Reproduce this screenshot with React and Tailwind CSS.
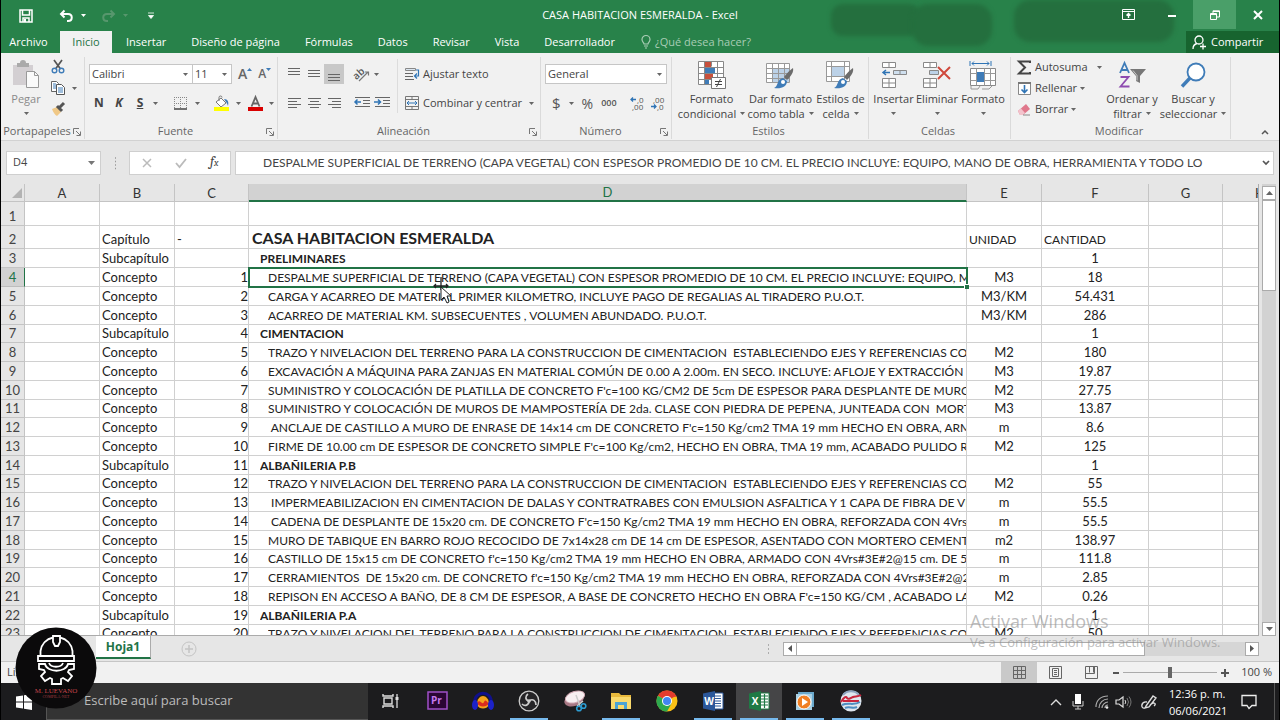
import React from 'react';
import { clsx } from 'clsx';

const DESPALME =
  'DESPALME SUPERFICIAL DE TERRENO (CAPA VEGETAL) CON ESPESOR PROMEDIO DE 10 CM. EL PRECIO INCLUYE: EQUIPO, MANO DE OBRA, HERRAMIENTA Y TODO LO';
const TRAZO =
  'TRAZO Y NIVELACION DEL TERRENO PARA LA CONSTRUCCION DE CIMENTACION  ESTABLECIENDO EJES Y REFERENCIAS CON';

const columns = [
  { id: 'A', width: 'w-[75px]' },
  { id: 'B', width: 'w-[75px]' },
  { id: 'C', width: 'w-[74px]' },
  { id: 'D', width: 'w-[718px]' },
  { id: 'E', width: 'w-[75px]' },
  { id: 'F', width: 'w-[107px]' },
  { id: 'G', width: 'w-[74px]' },
  { id: 'H', width: 'w-[75px]' },
];

// [tipo, número, descripción, unidad, cantidad]
const rows = [
  ['', '', '', '', ''],
  ['Capítulo', '-', 'CASA HABITACION ESMERALDA', 'UNIDAD', 'CANTIDAD'],
  ['Subcapítulo', '', 'PRELIMINARES', '', '1'],
  ['Concepto', '1', DESPALME, 'M3', '18'],
  ['Concepto', '2', 'CARGA Y ACARREO DE MATERIAL PRIMER KILOMETRO, INCLUYE PAGO DE REGALIAS AL TIRADERO P.U.O.T.', 'M3/KM', '54.431'],
  ['Concepto', '3', 'ACARREO DE MATERIAL KM. SUBSECUENTES , VOLUMEN ABUNDADO. P.U.O.T.', 'M3/KM', '286'],
  ['Subcapítulo', '4', 'CIMENTACION', '', '1'],
  ['Concepto', '5', TRAZO, 'M2', '180'],
  ['Concepto', '6', 'EXCAVACIÓN A MÁQUINA PARA ZANJAS EN MATERIAL COMÚN DE 0.00 A 2.00m. EN SECO. INCLUYE: AFLOJE Y EXTRACCIÓN', 'M3', '19.87'],
  ['Concepto', '7', "SUMINISTRO Y COLOCACIÓN DE PLATILLA DE CONCRETO F'c=100 KG/CM2 DE 5cm DE ESPESOR PARA DESPLANTE DE MUROS,", 'M2', '27.75'],
  ['Concepto', '8', 'SUMINISTRO Y COLOCACIÓN DE MUROS DE MAMPOSTERÍA DE 2da. CLASE CON PIEDRA DE PEPENA, JUNTEADA CON  MORTE', 'M3', '13.87'],
  ['Concepto', '9', " ANCLAJE DE CASTILLO A MURO DE ENRASE DE 14x14 cm DE CONCRETO F'c=150 Kg/cm2 TMA 19 mm HECHO EN OBRA, ARMA", 'm', '8.6'],
  ['Concepto', '10', "FIRME DE 10.00 cm DE ESPESOR DE CONCRETO SIMPLE F'c=100 Kg/cm2, HECHO EN OBRA, TMA 19 mm, ACABADO PULIDO RA", 'M2', '125'],
  ['Subcapítulo', '11', 'ALBAÑILERIA P.B', '', '1'],
  ['Concepto', '12', TRAZO, 'M2', '55'],
  ['Concepto', '13', ' IMPERMEABILIZACION EN CIMENTACION DE DALAS Y CONTRATRABES CON EMULSION ASFALTICA Y 1 CAPA DE FIBRA DE VID', 'm', '55.5'],
  ['Concepto', '14', " CADENA DE DESPLANTE DE 15x20 cm. DE CONCRETO F'c=150 Kg/cm2 TMA 19 mm HECHO EN OBRA, REFORZADA CON 4Vrs#4", 'm', '55.5'],
  ['Concepto', '15', 'MURO DE TABIQUE EN BARRO ROJO RECOCIDO DE 7x14x28 cm DE 14 cm DE ESPESOR, ASENTADO CON MORTERO CEMENTO-', 'm2', '138.97'],
  ['Concepto', '16', "CASTILLO DE 15x15 cm DE CONCRETO f'c=150 Kg/cm2 TMA 19 mm HECHO EN OBRA, ARMADO CON 4Vrs#3E#2@15 cm. DE 5.0", 'm', '111.8'],
  ['Concepto', '17', "CERRAMIENTOS  DE 15x20 cm. DE CONCRETO f'c=150 Kg/cm2 TMA 19 mm HECHO EN OBRA, REFORZADA CON 4Vrs#3E#2@20", 'm', '2.85'],
  ['Concepto', '18', "REPISON EN ACCESO A BAÑO, DE 8 CM DE ESPESOR, A BASE DE CONCRETO HECHO EN OBRA F'c=150 KG/CM , ACABADO LAV", 'M2', '0.26'],
  ['Subcapítulo', '19', 'ALBAÑILERIA P.A', '', '1'],
  ['Concepto', '20', TRAZO, 'M2', '50'],
];

const menuTabs = ['Insertar', 'Diseño de página', 'Fórmulas', 'Datos', 'Revisar', 'Vista', 'Desarrollador'];

const Svg = ({ w = 16, h = 16, children, className }) => (
  <svg width={w} height={h} viewBox={`0 0 ${w} ${h}`} fill="none" aria-hidden="true" className={clsx('shrink-0 overflow-visible', className)}>
    {children}
  </svg>
);

const Caret = ({ className = 'text-[#666]' }) => (
  <Svg w={5} h={3} className={className}>
    <path d="M0 0h5L2.500 3z" fill="currentColor" />
  </Svg>
);

const Lines = ({ rows: d }) => (
  <Svg w={14} h={14}>
    <path d={d} stroke="#666" />
  </Svg>
);

const Divider = () => <span className="h-5 w-px bg-[#d8d8d8]" />;

/* ---------- title bar ---------- */

const TitleBar = () => (
  <div className="relative flex h-[31px] items-center justify-between text-white">
    <div className="flex items-center pl-[18px]">
      <button aria-label="Guardar" className="flex w-[38px]">
        <Svg w={14} h={14}>
          <path d="M1 1h12v12H1zM3.500 1v5h7V1M4 13V9h6v4" stroke="#fff" strokeWidth="1.500" />
          <path d="M5 10h2v3H5z" fill="#fff" />
        </Svg>
      </button>
      <button aria-label="Deshacer" className="flex w-[42px] items-center gap-[7px] pl-[2px]">
        <Svg w={15} h={14}>
          <path d="M5.500 1.500L2 5l3.500 3.500M2.500 5H9c5 0 5 7 0 7H8" stroke="#fff" strokeWidth="2" />
        </Svg>
        <Caret className="text-white" />
      </button>
      <button aria-label="Rehacer" className="flex w-[49px] items-center gap-[7px] pl-[2px]">
        <Svg w={15} h={14}>
          <path d="M9.500 1.500L13 5 9.500 8.500M12.500 5H6c-5 0-5 7 0 7h1" stroke="#57976d" strokeWidth="2" />
        </Svg>
        <Caret className="text-[#57976d]" />
      </button>
      <button aria-label="Personalizar barra" className="flex">
        <Svg w={6} h={7}>
          <path d="M0 1h6M.5 3.500h5L3 6.500z" fill="#fff" stroke="#fff" strokeWidth=".8" />
        </Svg>
      </button>
    </div>
    <h1 className="absolute left-1/2 -translate-x-1/2 text-[11px]">CASA HABITACION ESMERALDA - Excel</h1>
    <div className="flex h-[29px] self-start">
      <button aria-label="Opciones de la cinta" className="grid w-[43px] place-items-center">
        <Svg w={13} h={11}>
          <path d="M.5.500h12v10H.5zM.5 2.500h12" stroke="#fff" />
          <path d="M6.500 9V5M4.500 6.500l2-2 2 2" stroke="#fff" strokeWidth="1.400" />
        </Svg>
      </button>
      <button aria-label="Minimizar" className="grid w-[43px] place-items-center">
        <Svg w={10} h={4}>
          <path d="M1 3h8" stroke="#fff" strokeWidth="2" />
        </Svg>
      </button>
      <button aria-label="Restaurar" className="grid w-[43px] place-items-center bg-[#4a9f69]">
        <Svg w={10} h={10}>
          <path d="M.5 3.500h6v6h-6zM.5 4.500h6M3 3V.800h6.500V7H7M3 1.500h6" stroke="#fff" />
        </Svg>
      </button>
      <button aria-label="Cerrar" className="grid w-[43px] place-items-center">
        <Svg w={10} h={10}>
          <path d="M1 1l8 8M9 1L1 9" stroke="#fff" strokeWidth="2" />
        </Svg>
      </button>
    </div>
  </div>
);

const MenuTabs = () => (
  <nav className="relative flex h-[22px] items-stretch text-[11px] text-white">
    <button className="w-[59px] pr-1">Archivo</button>
    <button className="mr-px w-[52px] bg-[#f1f1f1] text-[#217346]">Inicio</button>
    {menuTabs.map((t) => (
      <button key={t} className="pl-[13px] pr-3">
        {t}
      </button>
    ))}
    <button className="flex items-center gap-1 pl-[14px] text-[#a9cdb5]">
      <Svg w={10} h={14}>
        <path d="M3 9C3 7.500 1 7 1 4.500a4 4 0 018 0C9 7 7 7.500 7 9zM3 11h4M4 13h2" stroke="#a9cdb5" strokeWidth="1.200" />
      </Svg>
      ¿Qué desea hacer?
    </button>
    <button className="ml-auto flex w-[93px] items-center gap-1 bg-[#17642f] pl-[6px]">
      <Svg w={15} h={15}>
        <circle cx="7" cy="5" r="4" stroke="#fff" strokeWidth="1.300" />
        <path d="M1 14c0-3 2-5 4-5.500M8 11.500h6M11 8.500v6" stroke="#fff" strokeWidth="1.300" />
      </Svg>
      Compartir
    </button>
  </nav>
);

/* ---------- ribbon ---------- */

const Group = ({ label, width, launcher, children }) => (
  <section className={clsx('flex shrink-0 flex-col pt-1', width)}>
    <div className="flex min-h-0 flex-1 border-r border-[#dadada] pt-[2px]">{children}</div>
    <div className="mb-px flex h-[15px] items-center border-r border-[#dadada] pr-[3px] text-[#666]">
      <span className="flex-1 text-center">{label}</span>
      {launcher && (
        <button aria-label={`Configuración de ${label}`}>
          <Svg w={8} h={8}>
            <path d="M.5 6V.500H6M3 3l4 4M7.500 3.500v4h-4" stroke="#777" />
          </Svg>
        </button>
      )}
    </div>
  </section>
);

const BigButton = ({ icon, top, bottom, width, muted }) => (
  <button className={clsx('flex shrink-0 flex-col items-center leading-[15px]', width, muted ? 'text-[#8a8a8a]' : 'text-[#444]')}>
    <span className="grid h-[32px] place-items-center">{icon}</span>
    <span className="whitespace-nowrap">{top}</span>
    <span className="flex h-[15px] items-center gap-1 whitespace-nowrap">
      {bottom}
      <Caret />
    </span>
  </button>
);

const Clipboard = () => (
  <Group label="Portapapeles" width="w-[84px]" launcher>
    <BigButton
      width="w-[50px]"
      top="Pegar"
      muted
      icon={
        <Svg w={28} h={30}>
          <path d="M1 5h20v20H1z" fill="#d3cfd2" />
          <path d="M5 3h3a3 3 0 016 0h3v4H5z" fill="#aaa" />
          <path d="M14.500 11.500h8l4 4v12h-12z" fill="#fafafa" stroke="#999" />
          <path d="M22.500 11.500v4h4" stroke="#999" />
        </Svg>
      }
    />
    <div className="flex flex-col gap-[7px]">
      <button aria-label="Cortar">
        <Svg w={14} h={15}>
          <path d="M3 1l6.500 9M11 1L4.500 10" stroke="#555" strokeWidth="1.700" />
          <circle cx="3.500" cy="11.500" r="2.300" stroke="#3f7cb8" strokeWidth="1.400" />
          <circle cx="10.500" cy="11.500" r="2.300" stroke="#3f7cb8" strokeWidth="1.400" />
        </Svg>
      </button>
      <button aria-label="Copiar" className="flex items-center gap-[7px]">
        <Svg w={14} h={14}>
          <path d="M.5.500h5l2 2v8h-7z" fill="#fff" stroke="#666" />
          <path d="M2 3h3M2 5h3M2 7h3" stroke="#3f7cb8" />
          <path d="M5.500 3.500h5l3 3v7h-8z" fill="#fff" stroke="#555" />
          <path d="M7 7h5M7 9h5M7 11h5" stroke="#3f7cb8" />
        </Svg>
        <Caret />
      </button>
      <button aria-label="Copiar formato">
        <Svg w={15} h={14}>
          <path d="M1 7l5-2 4 5-4 4C4 13 2 10 1 7z" fill="#f0c886" />
          <path d="M6 4l5 5M8 6l5-5" stroke="#555" strokeWidth="3" />
        </Svg>
      </button>
    </div>
  </Group>
);

const ComboBox = ({ label, value, width }) => (
  <label className={clsx('relative flex h-5 items-center border border-[#c6c6c6] bg-white', width)}>
    <select aria-label={label} defaultValue={value} className="h-full w-full appearance-none pl-[2px] text-[#444] outline-none">
      <option>{value}</option>
    </select>
    <span className="pointer-events-none absolute right-1">
      <Caret />
    </span>
  </label>
);

const FontGroup = () => (
  <Group label="Fuente" width="w-[193px]" launcher>
    <div className="flex flex-col gap-[9px] pl-1 pt-[5px]">
      <div className="flex items-center">
        <ComboBox label="Fuente" value="Calibri" width="w-[104px]" />
        <ComboBox label="Tamaño" value="11" width="-ml-px w-[40px]" />
        <button aria-label="Aumentar tamaño" className="ml-[6px] flex text-[14px] font-semibold leading-5 text-[#666]">
          A
          <Svg w={5} h={3} className="mt-1">
            <path d="M0 3h5L2.500 0z" fill="#3f7cb8" />
          </Svg>
        </button>
        <button aria-label="Reducir tamaño" className="ml-[6px] flex text-[12px] font-semibold leading-5 text-[#666]">
          A
          <Svg w={5} h={3} className="mt-1">
            <path d="M0 0h5L2.500 3z" fill="#3f7cb8" />
          </Svg>
        </button>
      </div>
      <div className="flex h-5 items-center text-[12px] text-[#444]">
        <button className="w-5 font-bold">N</button>
        <button className="w-5 font-bold italic">K</button>
        <button className="w-[22px] font-bold underline">S</button>
        <span className="ml-[2px]"><Caret /></span>
        <span className="ml-2"><Divider /></span>
        <button aria-label="Bordes" className="ml-2 flex items-center gap-2">
          <Svg w={13} h={13}>
            <path d="M.5 0v11M6.500 0v11M12.500 0v11M0 .500h12M0 6.500h12" stroke="#888" strokeDasharray="1 1" />
            <path d="M0 12h13" stroke="#444" strokeWidth="1.500" />
          </Svg>
          <Caret />
        </button>
        <span className="ml-[7px]"><Divider /></span>
        <button aria-label="Color de relleno" className="ml-[7px] flex items-center gap-[6px]">
          <Svg w={16} h={15}>
            <path d="M2 6l5-4 5 5-5 4z" fill="#fff" stroke="#777" />
            <path d="M5 5V1.500a1.500 1.500 0 013 0" stroke="#777" />
            <path d="M10 3c4 0 5 3 4 7-1-3-2-4-4-7z" fill="#3f7cb8" />
            <path d="M0 11h15v4H0z" fill="#ff0" />
          </Svg>
          <Caret />
        </button>
        <button aria-label="Color de fuente" className="ml-[7px] flex items-center gap-[6px]">
          <Svg w={15} h={15}>
            <path d="M3.500 10.500L7.500 1l4 9.500M5 7.500h5" stroke="#666" strokeWidth="1.800" />
            <path d="M0 11h15v4H0z" fill="#d90000" />
          </Svg>
          <Caret />
        </button>
      </div>
    </div>
  </Group>
);

const Indent = ({ right }) => (
  <Svg w={16} h={12}>
    <path d="M1 .500h15M9 3.500h7M9 6.500h7M1 9.500h15" stroke="#666" />
    <path d={right ? 'M0 5h6M4 2.500L6.500 5 4 7.500' : 'M1 5h6M3.500 2.500L1 5l2.500 2.500'} stroke="#2f74b5" strokeWidth="1.500" />
  </Svg>
);

const AlignGroup = () => (
  <Group label="Alineación" width="w-[263px]" launcher>
    <div className="flex flex-col gap-[9px] pl-[6px] pt-[5px]">
      <div className="flex h-5 items-center">
        <button aria-label="Alinear arriba" className="grid h-5 w-5 place-items-center"><Lines rows="M1 1.500h12M1 4.500h12M1 7.500h12" /></button>
        <button aria-label="Alinear en medio" className="grid h-5 w-5 place-items-center"><Lines rows="M1 3.500h12M1 6.500h12M1 9.500h12" /></button>
        <button aria-label="Alinear abajo" className="grid h-5 w-5 place-items-center bg-[#c8c8c8]"><Lines rows="M1 7.500h12M1 10.500h12M1 13.500h12" /></button>
        <span className="ml-1"><Divider /></span>
        <button aria-label="Orientación" className="ml-[6px] flex items-center gap-1">
          <Svg w={16} h={15}>
            <text x="0" y="11" fontSize="10" fontWeight="600" fill="#555" transform="rotate(-42 4 9)">ab</text>
            <path d="M5 14l9-9M11 5h3.500v3.500" stroke="#777" strokeWidth="1.200" />
          </Svg>
          <Caret />
        </button>
      </div>
      <div className="flex h-5 items-center">
        <button aria-label="Alinear a la izquierda" className="grid h-5 w-5 place-items-center"><Lines rows="M1 2.500h13M1 5.500h9M1 8.500h13M1 11.500h9" /></button>
        <button aria-label="Centrar" className="grid h-5 w-5 place-items-center"><Lines rows="M1 2.500h13M3 5.500h9M1 8.500h13M3 11.500h9" /></button>
        <button aria-label="Alinear a la derecha" className="grid h-5 w-5 place-items-center"><Lines rows="M1 2.500h13M5 5.500h9M1 8.500h13M5 11.500h9" /></button>
        <span className="ml-1"><Divider /></span>
        <button aria-label="Disminuir sangría" className="ml-[6px]"><Indent /></button>
        <button aria-label="Aumentar sangría" className="ml-1"><Indent right /></button>
      </div>
    </div>
    <div className="ml-[7px] h-[54px] w-px self-start bg-[#dcdcdc]" />
    <div className="flex flex-col gap-[9px] pl-[7px] pt-[5px] text-[#444]">
      <button className="flex h-5 items-center gap-[3px] whitespace-nowrap">
        <Svg w={15} h={15}>
          <path d="M.5 1.500h10v2H.5z" fill="#dce6f0" stroke="#888" />
          <path d="M0 6.500h8M0 9.500h8M0 12.500h9" stroke="#666" />
          <path d="M11 3h2.500v6H10M12 6.500L9.500 9l2.500 2.500" stroke="#2f74b5" strokeWidth="1.200" />
        </Svg>
        Ajustar texto
      </button>
      <button className="flex h-5 items-center gap-[3px] whitespace-nowrap">
        <Svg w={15} h={15}>
          <path d="M.5.500h13v13H.5zM.5 3.500h13M.5 10.500h13M7 .500v3M7 10.500v3" stroke="#777" />
          <path d="M2 7h10M4 5L2 7l2 2M10 5l2 2-2 2" stroke="#2f74b5" />
        </Svg>
        Combinar y centrar
        <span className="ml-1"><Caret /></span>
      </button>
    </div>
  </Group>
);

const NumberGroup = () => (
  <Group label="Número" width="w-[131px]" launcher>
    <div className="flex flex-col gap-[9px] pl-1 pt-[5px] text-[#555]">
      <ComboBox label="Formato de número" value="General" width="w-[122px]" />
      <div className="flex h-5 items-center">
        <button aria-label="Moneda" className="flex items-center gap-2 pl-[7px] text-[15px]">
          $ <Caret />
        </button>
        <button className="ml-2 text-[14px]">%</button>
        <button className="ml-2 text-[9px] font-semibold">000</button>
        <span className="ml-[6px]"><Divider /></span>
        <button aria-label="Aumentar decimales" className="ml-[7px]">
          <Svg w={15} h={14}>
            <path d="M1 3.500h5M3 1.500l-2 2 2 2" stroke="#2f74b5" strokeWidth="1.300" />
            <text x="7" y="7" fontSize="8" fill="#555">,0</text>
            <text x="2" y="14" fontSize="8" fill="#555">,00</text>
          </Svg>
        </button>
        <button aria-label="Disminuir decimales" className="ml-[5px]">
          <Svg w={15} h={14}>
            <path d="M1 10.500h5M4 8.500l2 2-2 2" stroke="#2f74b5" strokeWidth="1.300" />
            <text x="3" y="7" fontSize="8" fill="#555">,00</text>
            <text x="7" y="14" fontSize="8" fill="#555">,0</text>
          </Svg>
        </button>
      </div>
    </div>
  </Group>
);

const BrushTip = () => (
  <>
    <path d="M27 7c1 4-2 8-6 12l-3-3c3-4 6-7 9-9z" fill="#6c6c6c" />
    <path d="M17 17l4 3c0 6-6 8-13 7 4-1 3-9 9-10z" fill="#3f7cb8" />
    <circle cx="17" cy="21" r="2" fill="#fff" />
  </>
);

const StylesGroup = () => (
  <Group label="Estilos" width="w-[197px]">
    <div className="flex pl-[5px]">
      <BigButton
        width="w-[69px]"
        top="Formato"
        bottom="condicional"
        icon={
          <Svg w={29} h={28}>
            <path d="M1.500.500h25v23h-25z" fill="#fff" />
            <path d="M8 1h6v5H8zM8 12h8v6H8z" fill="#c8503c" />
            <path d="M8 6h10v6H8zM8 18h4v5H8z" fill="#3f7cb8" />
            <path d="M1.500.500h25v23h-25zM1.500 6.500h25M1.500 12.500h25M1.500 18.500h25M7.500.500v23M20.500.500v23M14.500.500v5" stroke="#888" />
            <path d="M14.500 16.500h14v11h-14z" fill="#fff" stroke="#777" />
            <path d="M18 20.500h7M18 23.500h7M23.500 18l-4 8" stroke="#444" />
          </Svg>
        }
      />
      <BigButton
        width="w-[69px]"
        top="Dar formato"
        bottom="como tabla"
        icon={
          <Svg w={29} h={28}>
            <path d="M.5 2.500h23v19H.5z" fill="#fff" />
            <path d="M6 7h17v14H6z" fill="#bcd2e8" />
            <path d="M.5 2.500h23v19H.5zM.5 7.500h23M.5 12.500h23M.5 17.500h23M6.500 2.500v19M12.500 2.500v19M18.500 2.500v19" stroke="#999" />
            <BrushTip />
          </Svg>
        }
      />
      <BigButton
        width="w-[51px]"
        top="Estilos de"
        bottom="celda"
        icon={
          <Svg w={29} h={28}>
            <path d="M.5.500h23v20H.5z" fill="#fff" />
            <path d="M5 6h14v9H5z" fill="#bcd2e8" />
            <path d="M.5.500h23v20H.5zM.5 5.500h23M.5 15.500h23M5.500.500v20M18.500.500v20" stroke="#999" />
            <BrushTip />
          </Svg>
        }
      />
    </div>
  </Group>
);

const CellsGroup = () => (
  <Group label="Celdas" width="w-[142px]">
    <div className="flex pl-[3px]">
      <BigButton
        width="w-[43px]"
        top="Insertar"
        icon={
          <Svg w={26} h={27}>
            <path d="M1.500.500h13v5h-13zM8 .500v5M1.500 16.500h13v9h-13zM8 16.500v9M1.500 21h13" fill="#fff" stroke="#888" />
            <path d="M12.500 8.500h13v4h-13z" fill="#cfdfee" stroke="#888" />
            <path d="M19 8.500v4" stroke="#888" />
            <path d="M2 10.500h7M5 8l-3 2.500L5 13" stroke="#2f74b5" strokeWidth="1.500" />
          </Svg>
        }
      />
      <BigButton
        width="w-[44px]"
        top="Eliminar"
        icon={
          <Svg w={28} h={27}>
            <path d="M.5.500h13v5H.5zM7 .500v5M.5 16.500h13v9H.5zM7 16.500v9M.5 21h13" fill="#fff" stroke="#888" />
            <path d="M6.500 8.500h9v4h-9z" fill="#bcd2e8" stroke="#888" />
            <path d="M15 5l12 12M27 5L15 17" stroke="#d0493c" strokeWidth="2" />
          </Svg>
        }
      />
      <BigButton
        width="w-[48px]"
        top="Formato"
        icon={
          <Svg w={28} h={29}>
            <path d="M1 0v5M22 0v5M3 2.500h17M5 .500l-2 2 2 2M18 .500l2 2-2 2" stroke="#2f74b5" />
            <path d="M1.500 7.500h25v17h-25z" fill="#fff" stroke="#888" />
            <path d="M1.500 12.500h25M1.500 19.500h25M7.500 7.500v17M15.500 7.500v17M21.500 7.500v17" stroke="#999" />
            <path d="M8 11h7v10H8z" fill="#3f7cb8" />
            <path d="M2 25v3h7l2-3M13 28h7l3-3" stroke="#999" />
          </Svg>
        }
      />
    </div>
  </Group>
);

const EditGroup = () => (
  <Group label="Modificar" width="w-[220px]">
    <div className="-mt-[2px] flex w-[90px] flex-col pl-[6px] text-[#444]">
      <button className="flex h-[21px] items-center gap-[3px]">
        <Svg w={15} h={15}>
          <path d="M13 3V1.500H2L8 7.500l-6 6h11V12" stroke="#444" strokeWidth="2" />
        </Svg>
        Autosuma
        <span className="ml-[6px]"><Caret /></span>
      </button>
      <button className="flex h-[21px] items-center gap-[3px]">
        <Svg w={15} h={15}>
          <path d="M1.500 1.500h12v12h-12z" fill="#fff" stroke="#888" />
          <path d="M1 1h13v2H1z" fill="#777" />
          <path d="M7.500 4v7M4.500 8.500l3 3 3-3" stroke="#2f74b5" strokeWidth="1.600" />
        </Svg>
        Rellenar
        <Caret />
      </button>
      <button className="flex h-[21px] items-center gap-[3px]">
        <Svg w={15} h={15}>
          <path d="M1 9l8-7 4 5-7 6H3z" fill="#e0788c" />
          <path d="M1 9l3-2.500L8 11l-2 2H3z" fill="#f3c3cc" />
          <path d="M6 13h7" stroke="#888" />
        </Svg>
        Borrar
        <Caret />
      </button>
    </div>
    <BigButton
      width="w-[62px]"
      top="Ordenar y"
      bottom="filtrar"
      icon={
        <Svg w={28} h={28}>
          <path d="M2 12L6.500 2 11 12M3.500 9h6" stroke="#3f7cb8" strokeWidth="1.800" />
          <path d="M2.500 16h8l-8 9.500h9" stroke="#8e4bb0" strokeWidth="1.800" />
          <path d="M12 8h16l-6 7v7l-4-2v-5z" fill="#777" />
          <path d="M15 9.500l4 5v5" stroke="#ccc" />
        </Svg>
      }
    />
    <BigButton
      width="w-[60px]"
      top="Buscar y"
      bottom="seleccionar"
      icon={
        <Svg w={26} h={27}>
          <circle cx="16" cy="10" r="8.500" fill="#fff" stroke="#3f7cb8" strokeWidth="1.800" />
          <path d="M10 16l-8 8.500" stroke="#3f7cb8" strokeWidth="3.400" />
        </Svg>
      }
    />
  </Group>
);

const Ribbon = () => (
  <div className="flex h-[88px] shrink-0 border-b border-[#d2d2d2] bg-[#f1f1f1]">
    <Clipboard />
    <FontGroup />
    <AlignGroup />
    <NumberGroup />
    <StylesGroup />
    <CellsGroup />
    <EditGroup />
    <button aria-label="Contraer la cinta" className="mb-1 ml-auto mr-[10px] self-end">
      <Svg w={8} h={8}>
        <path d="M1 6l3-3 3 3" stroke="#555" strokeWidth="1.500" />
      </Svg>
    </button>
  </div>
);

/* ---------- formula bar and sheet ---------- */

const FormulaBar = () => (
  <div className="flex h-[43px] shrink-0 items-center pl-[5px] pr-[5px] text-[#444]">
    <div className="flex h-6 w-[95px] items-center border border-[#cfcfcf] bg-white pr-[5px]">
      <input aria-label="Cuadro de nombres" defaultValue="D4" className="w-full pl-[6px] outline-none" />
      <Svg w={7} h={4}>
        <path d="M0 0h7L3.500 4z" fill="#777" />
      </Svg>
    </div>
    <Svg w={3} h={12} className="ml-[13px]">
      <path d="M1 1h1M1 4.500h1M1 8h1M1 11.500h1" stroke="#999" strokeWidth="1.500" />
    </Svg>
    <div className="ml-3 flex h-6 w-[102px] items-center justify-around border border-[#cfcfcf] bg-white">
      <button aria-label="Cancelar">
        <Svg w={10} h={10}><path d="M1 1l8 8M9 1L1 9" stroke="#bbb" strokeWidth="1.500" /></Svg>
      </button>
      <button aria-label="Introducir">
        <Svg w={12} h={10}><path d="M1 5l3.500 4L11 1" stroke="#bbb" strokeWidth="1.800" /></Svg>
      </button>
      <button aria-label="Insertar función" className="font-serif text-[14px] italic leading-4 text-[#444]">
        f<span className="text-[10px]">x</span>
      </button>
    </div>
    <div className="ml-1 flex h-6 min-w-0 flex-1 items-center border border-[#cfcfcf] bg-white pr-[3px]">
      <input
        aria-label="Barra de fórmulas"
        defaultValue={DESPALME}
        className="min-w-0 flex-1 pl-[27px] font-['Lato',sans-serif] text-[12px] outline-none"
      />
      <Svg w={8} h={8}>
        <path d="M1 2l3 3 3-3" stroke="#555" strokeWidth="1.700" />
      </Svg>
    </div>
  </div>
);

const Cursor = () => (
  <svg width="24" height="28" viewBox="0 0 24 28" className="pointer-events-none absolute left-[184px] top-2 z-10" aria-hidden="true">
    <path d="M8 1v13M1 10h14M3 8l-2 2 2 2M13 8l2 2-2 2" fill="none" stroke="#222" strokeWidth="1.300" />
    <path d="M8 11v13l3-3 3 6 2-1-2-6h4z" fill="#fff" stroke="#222" />
  </svg>
);

const cell = 'overflow-hidden whitespace-pre border-b border-r border-[#d0d0d0] p-0 align-bottom';

const Row = ({ data, n }) => {
  const [kind, num, text, unit, qty] = data;
  const chapter = kind === 'Capítulo';
  const sub = kind === 'Subcapítulo';
  const active = n === 4;
  return (
    <tr className={clsx(n === 1 ? 'h-6' : n === 2 ? 'h-[23px]' : 'h-[19px] nth-[4n+7]:h-[18px]')}>
      <th
        scope="row"
        className={clsx(
          'border-b border-r p-0 align-bottom font-normal',
          active ? 'border-b-[#bdbdbd] border-r-[#217346] bg-[#d2d2d2] text-[#217346]' : 'border-[#c4c4c4] bg-[#e6e6e6] text-[#444]'
        )}
      >
        {n}
      </th>
      <td className={cell} />
      <td className={clsx(cell, 'pl-[2px]')}>{kind}</td>
      <td className={clsx(cell, chapter ? 'pl-[2px]' : 'text-right')}>{num}</td>
      <td
        className={clsx(
          cell,
          active && 'relative overflow-visible',
          chapter ? 'pl-[3px] text-[16px] font-bold leading-5' : 'text-[12px]',
          sub && 'pl-[11px] font-bold',
          !chapter && !sub && 'pl-[19px]'
        )}
      >
        <div className="overflow-hidden">{text}</div>
        {active && (
          <>
            <span className="absolute -left-px -top-px bottom-[-2px] right-[-2px] border-2 border-[#217346]" />
            <span className="absolute bottom-[-3px] right-[-3px] h-[5px] w-[5px] border-l border-t border-white bg-[#217346]" />
            <Cursor />
          </>
        )}
      </td>
      <td className={clsx(cell, chapter ? 'pl-[2px] text-[12px]' : 'text-center')}>{unit}</td>
      <td className={clsx(cell, chapter ? 'pl-[2px] text-[12px]' : 'text-center')}>{qty}</td>
      <td className={cell} />
      <td className={cell} />
    </tr>
  );
};

const Sheet = () => (
  <div className="flex min-h-0 flex-1">
    <div className="min-w-0 flex-1 overflow-hidden border-b border-r border-[#ababab]">
      <table className="w-[1297px] table-fixed border-separate border-spacing-0 bg-white font-['Lato',sans-serif] text-[13px] leading-[17px] text-[#222]">
        <thead>
          <tr className="h-[18px]">
            <th aria-label="Seleccionar todo" className="w-6 border-b border-r border-[#c4c4c4] bg-[#e6e6e6] p-0">
              <Svg w={12} h={12} className="ml-[10px]">
                <path d="M11 1v10H1z" fill="#b3b3b3" />
              </Svg>
            </th>
            {columns.map((c) => (
              <th
                key={c.id}
                scope="col"
                className={clsx(
                  'border-r border-[#c4c4c4] p-0 font-normal leading-4',
                  c.width,
                  c.id === 'D' ? 'border-b-2 border-b-[#217346] bg-[#d2d2d2] text-[#217346]' : 'border-b bg-[#e6e6e6] text-[#333]'
                )}
              >
                {c.id}
              </th>
            ))}
          </tr>
        </thead>
        <tbody>
          {rows.map((r, i) => (
            <Row key={i} data={r} n={i + 1} />
          ))}
        </tbody>
      </table>
    </div>
    <div className="ml-[3px] mr-[3px] flex w-[14px] flex-col bg-[#d2d2d2] pt-[2px]">
      <button aria-label="Subir" className="grid h-[14px] place-items-center border border-[#ababab] bg-white">
        <Svg w={7} h={4}><path d="M0 4h7L3.500 0z" fill="#666" /></Svg>
      </button>
      <div className="h-[91px] border border-[#ababab] bg-white" />
      <button aria-label="Bajar" className="mt-auto grid h-[14px] place-items-center border border-[#ababab] bg-white">
        <Svg w={7} h={4}><path d="M0 0h7L3.500 4z" fill="#666" /></Svg>
      </button>
    </div>
  </div>
);

const SheetTabs = () => (
  <div className="flex h-[26px] shrink-0 border-b border-[#c6c6c6] pr-5">
    <button className="ml-[95px] h-[23px] w-[55px] border-b-2 border-r border-b-[#217346] border-r-[#ababab] bg-white text-[12px] font-bold text-[#217346]">
      Hoja1
    </button>
    <button aria-label="Hoja nueva" className="ml-[30px]">
      <Svg>
        <circle cx="8" cy="8" r="7" stroke="#c4c4c4" />
        <path d="M4 8h8M8 4v8" stroke="#c4c4c4" strokeWidth="1.500" />
      </Svg>
    </button>
    <div className="ml-auto flex items-center">
      <Svg w={3} h={10} className="mr-[13px]">
        <path d="M1 1h1M1 5h1M1 9h1" stroke="#999" strokeWidth="1.500" />
      </Svg>
      <div className="flex h-[14px] w-[476px] bg-[#d6d6d6]">
        <button aria-label="Izquierda" className="grid w-[14px] place-items-center border border-[#ababab] bg-white">
          <Svg w={4} h={7}><path d="M4 0v7L0 3.500z" fill="#555" /></Svg>
        </button>
        <div className="w-[348px] border-y border-r border-[#ababab] bg-white" />
        <button aria-label="Derecha" className="ml-auto grid w-[14px] place-items-center border border-[#ababab] bg-white">
          <Svg w={4} h={7}><path d="M0 0v7l4-3.500z" fill="#555" /></Svg>
        </button>
      </div>
    </div>
  </div>
);

const StatusBar = () => (
  <div className="flex h-[21px] shrink-0 items-center bg-[#f1f1f1] text-[#444]">
    <span className="pl-[6px]">Listo</span>
    <div className="ml-auto flex h-full items-center pr-[7px]">
      <button aria-label="Normal" className="grid h-full w-9 place-items-center bg-[#c9c9c9]">
        <Svg w={13} h={13}><path d="M.5.500h12v12H.5zM.5 4.500h12M.5 8.500h12M4.500.500v12M8.500.500v12" stroke="#666" /></Svg>
      </button>
      <button aria-label="Diseño de página" className="grid h-full w-9 place-items-center">
        <Svg w={13} h={13}><path d="M.5.500h12v12H.5zM3.500 2.500h6v8h-6zM5 4.500h3M5 6.500h3M5 8.500h3" stroke="#666" /></Svg>
      </button>
      <button aria-label="Vista previa de salto de página" className="grid h-full w-9 place-items-center">
        <Svg w={13} h={13}><path d="M.5.500h12v12H.5zM4.500.500v6M8.500.500v6M.5 7.500h9v-7" stroke="#666" /></Svg>
      </button>
      <button aria-label="Alejar" className="ml-1">
        <Svg w={6} h={6}><path d="M0 3h6" stroke="#555" strokeWidth="2" /></Svg>
      </button>
      <input
        type="range"
        aria-label="Zoom"
        className="mx-[4px] h-3 w-[94px] appearance-none bg-[linear-gradient(#aaa,#aaa)] bg-[length:100%_1px] bg-center bg-no-repeat [&::-webkit-slider-thumb]:h-[11px] [&::-webkit-slider-thumb]:w-1 [&::-webkit-slider-thumb]:appearance-none [&::-webkit-slider-thumb]:bg-[#666]"
      />
      <button aria-label="Acercar">
        <Svg w={8} h={8}><path d="M0 4h8M4 0v8" stroke="#555" strokeWidth="2" /></Svg>
      </button>
      <span className="ml-3 whitespace-nowrap">100 %</span>
    </div>
  </div>
);

/* ---------- windows taskbar ---------- */

const OfficeIcon = ({ letter, color, sheet }) => (
  <Svg w={22} h={20}>
    <path d="M11 2h10v16H11z" fill="#fff" stroke={color} />
    <path d={sheet ? 'M13 5h7M13 8h7M13 11h7M13 14h7M16.500 3v14' : 'M13 5h6M13 7.500h6M13 10h6M13 12.500h6M13 15h6'} stroke={color} strokeWidth="1.200" />
    <path d="M1 2.500L13 0v20L1 17.500z" fill={color} />
    <text x="7" y="14" textAnchor="middle" fontSize="10" fontWeight="700" fill="#fff">{letter}</text>
  </Svg>
);

const apps = [
  {
    name: 'Vista de tareas',
    icon: (
      <Svg w={18} h={16}>
        <path d="M1 1v2h10V1M1 15v-2h10v2M2 5h8v6H2z" stroke="#ddd" strokeWidth="1.400" />
        <path d="M15 1v14" stroke="#ddd" strokeWidth="1.300" />
        <path d="M13.500 4h3v3h-3z" fill="#ddd" />
      </Svg>
    ),
  },
  {
    name: 'Premiere Pro',
    icon: (
      <Svg w={21} h={20}>
        <path d="M1 1h19v17H1z" fill="#2a0634" stroke="#a050c8" strokeWidth="1.500" />
        <text x="4" y="13" fontSize="10" fontWeight="700" fill="#c679ef">Pr</text>
      </Svg>
    ),
  },
  {
    name: 'Audacity',
    icon: (
      <Svg w={24} h={21}>
        <path d="M4 13C2 0 22 0 20 13" stroke="#10108c" strokeWidth="3" />
        <path d="M6 14c0-5 3-8 6-8s6 3 6 8c-1 6-11 6-12 0z" fill="#f5a31c" />
        <path d="M6 13c3-5 5 3 7-1s3 1 5 1c-1 4-10 5-12 0z" fill="#d92d1e" />
        <ellipse cx="4" cy="15" rx="3" ry="5" fill="#1c22c8" />
        <ellipse cx="20" cy="15" rx="3" ry="5" fill="#1c22c8" />
      </Svg>
    ),
  },
  {
    name: 'OBS Studio',
    running: true,
    icon: (
      <Svg w={22} h={22}>
        <circle cx="11" cy="11" r="9.800" fill="#252427" stroke="#ccc" strokeWidth="1.300" />
        <path d="M11 11c-4-1-4-5-1-7M11 11c4-3 7 0 7 4M11 11c0 4-4 6-7 3" stroke="#ccc" strokeWidth="1.700" />
        <circle cx="11" cy="11" r="1.800" fill="#ccc" />
      </Svg>
    ),
  },
  {
    name: 'Recortes',
    icon: (
      <Svg w={24} h={22}>
        <ellipse cx="11" cy="10" rx="10" ry="6" fill="#a87884" transform="rotate(-18 11 10)" />
        <ellipse cx="12" cy="7" rx="10" ry="5.500" fill="#f7eff1" stroke="#d0a8b2" transform="rotate(-18 12 7)" />
        <path d="M13 5l4 11M20 11l-6 5" stroke="#ccc" strokeWidth="1.500" />
        <circle cx="16" cy="18.500" r="2.300" stroke="#2c9bd0" strokeWidth="1.600" />
        <circle cx="20.500" cy="16" r="2.300" stroke="#2c9bd0" strokeWidth="1.600" />
      </Svg>
    ),
  },
  {
    name: 'Explorador de archivos',
    running: true,
    icon: (
      <Svg w={22} h={20}>
        <path d="M1 2h8l2 2h10v14H1z" fill="#e8b93c" />
        <path d="M1 6h20v12H1z" fill="#f9d96c" />
        <path d="M5 18v-7h12v7h-3v-4H8v4z" fill="#4ba3d4" />
      </Svg>
    ),
  },
  {
    name: 'Chrome',
    icon: (
      <Svg w={22} h={22}>
        <circle cx="11" cy="11" r="10.500" fill="#fbc116" />
        <path d="M11 11L1.900 5.700A10.500 10.500 0 0120.100 5.700z" fill="#e33b2e" />
        <path d="M1.900 5.700A10.500 10.500 0 0011 21.500L15.500 13.500 11 11z" fill="#2da94f" />
        <path d="M11 6h9.200" stroke="#e33b2e" strokeWidth="1.500" />
        <circle cx="11" cy="11" r="5" fill="#fff" />
        <circle cx="11" cy="11" r="4" fill="#4285f4" />
      </Svg>
    ),
  },
  { name: 'Word', running: true, icon: <OfficeIcon letter="W" color="#2b579a" /> },
  { name: 'Excel', running: true, active: true, icon: <OfficeIcon letter="X" color="#1f7a45" sheet /> },
  {
    name: 'Reproductor multimedia',
    running: true,
    icon: (
      <Svg w={20} h={20}>
        <path d="M3 1h16v15H3z" fill="#6aa8cc" />
        <path d="M1 3h16v16H1z" fill="#a9d0e4" />
        <circle cx="9" cy="11" r="7" fill="#f07f24" stroke="#fff" />
        <path d="M7 7l6 4-6 4z" fill="#fff" />
      </Svg>
    ),
  },
  {
    name: 'Opus',
    running: true,
    icon: (
      <Svg w={24} h={22}>
        <circle cx="12" cy="11" r="10.500" fill="#dfe6ee" />
        <path d="M4 5c4-5 12-5 16 0" stroke="#8fa5c0" strokeWidth="2" />
        <path d="M2 12c3-5 5-6 6-4s4 0 6-1 5 0 8-2M4 11h16" stroke="#c8253c" strokeWidth="2" />
        <path d="M3 15c6-3 12 1 18-3M6 18c4-2 8 1 12-1" stroke="#4d8dc0" strokeWidth="2" />
      </Svg>
    ),
  },
];

const Taskbar = () => (
  <div className="flex h-[37px] shrink-0 bg-[#1c1c1e] text-white">
    <button aria-label="Inicio" className="w-[45px] pl-[15px]">
      <Svg w={16} h={16}>
        <path d="M0 2.500L7 1.500v6H0zM8 1.300L16 0v7.500H8zM0 8.500h7v6L0 13.500zM8 8.500h8V16l-8-1.300z" fill="#fff" />
      </Svg>
    </button>
    <input
      aria-label="Buscar"
      placeholder="Escribe aquí para buscar"
      className="w-[322px] border-b border-l border-[#555] bg-[#333] pl-[37px] text-[13px] outline-none placeholder:text-[#bbb]"
    />
    {apps.map((a) => (
      <button
        key={a.name}
        aria-label={a.name}
        className={clsx('flex w-[46px] flex-col items-center px-1', a.active && 'bg-[#454547]')}
      >
        <span className="grid flex-1 place-items-center">{a.icon}</span>
        <span className={clsx('h-[2px] w-full', a.running && 'bg-[#76b9ed]')} />
      </button>
    ))}
    <div className="ml-auto flex items-center">
      <button aria-label="Iconos ocultos" className="w-[22px]">
        <Svg w={12} h={8}><path d="M1 7l5-5 5 5" stroke="#ddd" strokeWidth="1.400" /></Svg>
      </button>
      <button aria-label="Micrófono" className="w-[23px]">
        <Svg w={12} h={16}>
          <path d="M3 0h6v10H3z" fill="#fff" />
          <path d="M1 7v5h10V7M6 12v3M3 15h6" stroke="#ccc" />
        </Svg>
      </button>
      <button aria-label="Wi-Fi" className="w-[20px]">
        <Svg w={14} h={14}>
          <path d="M1 12C1 5 6 1 13 1M4 13c0-5 4-9 9-9M7 13c0-3 3-6 6-6M10 13c0-2 1-3 3-3" stroke="#aaa" strokeWidth="1.200" />
          <circle cx="12" cy="12.500" r="1.300" fill="#eee" />
        </Svg>
      </button>
      <button aria-label="Volumen" className="w-[26px]">
        <Svg w={16} h={14}>
          <path d="M1 5h3l4-3v10L4 9H1z" stroke="#ddd" strokeWidth="1.200" />
          <path d="M10 5q1.500 2 0 4" stroke="#ddd" />
          <path d="M12 3q3 4 0 8M14 1.500q4 5.500 0 11" stroke="#777" />
        </Svg>
      </button>
      <button aria-label="Windows Ink" className="w-[28px]">
        <Svg w={17} h={16}>
          <path d="M5 12L12 2l3 2-7 9-4 1zM6 8C0 7-1 15 4 14M9 11c4-4 7-1 4 1" stroke="#ddd" strokeWidth="1.400" />
        </Svg>
      </button>
      <time className="w-[54px] whitespace-nowrap text-right text-[11px] leading-[17px]">
        12:36 p. m.
        <br />
        06/06/2021
      </time>
      <button aria-label="Notificaciones" className="grid h-full w-[52px] place-items-center border-r border-[#555]">
        <Svg w={16} h={16}>
          <path d="M1 1.500h14v10h-4L8 14.500l-2-3H1z" stroke="#eee" strokeWidth="1.300" />
        </Svg>
      </button>
      <span className="w-1" />
    </div>
  </div>
);

/* ---------- overlays ---------- */

const ChannelLogo = () => (
  <svg width="82" height="82" viewBox="0 0 82 82" className="absolute bottom-[11px] left-[14px]" role="img" aria-label="M. Luevano">
    <circle cx="41" cy="41" r="40.500" fill="#0b0a0b" />
    <g fill="none" stroke="#fff" strokeWidth="1.800">
      <path d="M25.500 28v-4c1-7 6-12 12.500-13.500M57.500 28v-4c-1-7-6-12-12.500-13.500" />
      <path d="M38 15V9h7v6l-2 4h-3z" />
      <path d="M23 29h36v5H23z" />
      <path d="M24 37h6c2 9 21 9 23 0h6v5l-5 1-1 2 4 4-4 5-5-3-2 1v5h-9v-5l-2-1-5 3-4-5 4-4-1-2-5-1z" />
      <path d="M34 36c2 5 12 5 14 0" />
    </g>
    <text x="41" y="66" textAnchor="middle" fontSize="7" fontFamily="Liberation Serif, serif" fill="#c4444a">M. LUEVANO</text>
    <text x="41" y="71" textAnchor="middle" fontSize="4" fontFamily="Liberation Serif, serif" fill="#a13a40">COMPILA·NET</text>
  </svg>
);

const Watermark = () => (
  <div className="pointer-events-none absolute bottom-[69px] right-[52px] w-[257px] whitespace-nowrap text-[#8f8f8f]/60">
    <p className="text-[18px] leading-[23px]">Activar Windows</p>
    <p className="text-[13px] leading-[18px]">Ve a Configuración para activar Windows.</p>
  </div>
);

const App = () => (
  <div className="relative flex h-screen min-h-[480px] flex-col overflow-hidden border-x border-black bg-[#e6e6e6] font-['Open_Sans',sans-serif] text-[11px]">
    <header className="relative shrink-0 bg-[#28824a]">
      <div className="absolute right-[358px] top-1 h-8 w-[90px] rounded-xl bg-[#246f3e] blur-[2px]" />
      <div className="absolute right-[287px] top-1 h-[42px] w-20 rounded-2xl bg-[#246f3e] blur-[2px]" />
      <div className="absolute right-[105px] top-0 h-[42px] w-[160px] rounded-2xl bg-[#246f3e] blur-[2px]" />
      <TitleBar />
      <MenuTabs />
    </header>
    <Ribbon />
    <FormulaBar />
    <Sheet />
    <SheetTabs />
    <StatusBar />
    <Taskbar />
    <Watermark />
    <ChannelLogo />
  </div>
);

export default App;
